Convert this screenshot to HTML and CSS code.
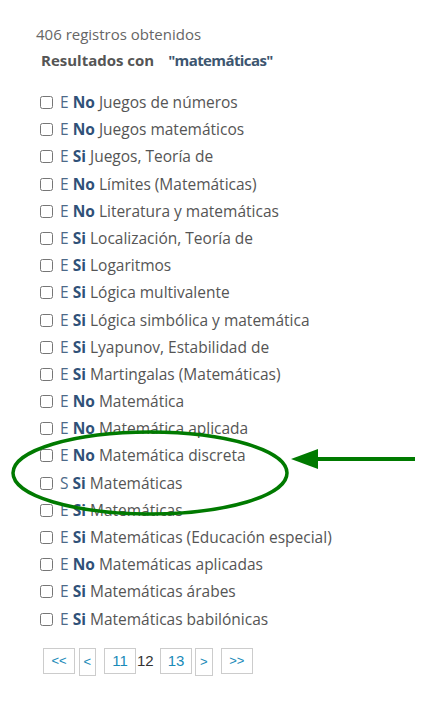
FILE: index.html
```html
<!DOCTYPE html>
<html lang="es">
<head>
<meta charset="utf-8">
<link rel="stylesheet" href="styles.css">
</head>
<body>
<div class="page">
  <p class="count">406 registros obtenidos</p>
  <p class="title">Resultados con <span class="q">"matemáticas"</span></p>
  <ul class="list">
    <li><input type="checkbox"><span class="t">E</span> <b>No</b> Juegos de números</li>
    <li><input type="checkbox"><span class="t">E</span> <b>No</b> Juegos matemáticos</li>
    <li><input type="checkbox"><span class="t">E</span> <b>Si</b> Juegos, Teoría de</li>
    <li><input type="checkbox"><span class="t">E</span> <b>No</b> Límites (Matemáticas)</li>
    <li><input type="checkbox"><span class="t">E</span> <b>No</b> Literatura y matemáticas</li>
    <li><input type="checkbox"><span class="t">E</span> <b>Si</b> Localización, Teoría de</li>
    <li><input type="checkbox"><span class="t">E</span> <b>Si</b> Logaritmos</li>
    <li><input type="checkbox"><span class="t">E</span> <b>Si</b> Lógica multivalente</li>
    <li><input type="checkbox"><span class="t">E</span> <b>Si</b> Lógica simbólica y matemática</li>
    <li><input type="checkbox"><span class="t">E</span> <b>Si</b> Lyapunov, Estabilidad de</li>
    <li><input type="checkbox"><span class="t">E</span> <b>Si</b> Martingalas (Matemáticas)</li>
    <li><input type="checkbox"><span class="t">E</span> <b>No</b> Matemática</li>
    <li><input type="checkbox"><span class="t">E</span> <b>No</b> Matemática aplicada</li>
    <li><input type="checkbox"><span class="t">E</span> <b>No</b> Matemática discreta</li>
    <li><input type="checkbox"><span class="t">S</span> <b>Si</b> Matemáticas</li>
    <li><input type="checkbox"><span class="t">E</span> <b>Si</b> Matemáticas</li>
    <li><input type="checkbox"><span class="t">E</span> <b>Si</b> Matemáticas (Educación especial)</li>
    <li><input type="checkbox"><span class="t">E</span> <b>No</b> Matemáticas aplicadas</li>
    <li><input type="checkbox"><span class="t">E</span> <b>Si</b> Matemáticas árabes</li>
    <li><input type="checkbox"><span class="t">E</span> <b>Si</b> Matemáticas babilónicas</li>
  </ul>
  <nav class="pager">
    <a class="pg wide first">&lt;&lt;</a>
    <a class="pg narrow prev">&lt;</a>
    <a class="pg num">11</a>
    <span class="cur">12</span>
    <a class="pg num">13</a>
    <a class="pg narrow next">&gt;</a>
    <a class="pg wide last">&gt;&gt;</a>
  </nav>
  <svg class="mark" width="441" height="706" viewBox="0 0 441 706">
    <ellipse cx="150" cy="473" rx="137" ry="41" fill="none" stroke="#007a00" stroke-width="3.5"/>
    <line x1="312" y1="459" x2="415" y2="459" stroke="#007a00" stroke-width="4"/>
    <polygon points="291,459 318,449 318,469" fill="#007a00"/>
  </svg>
</div>
</body>
</html>
```
FILE: styles.css
```css
body {
  margin: 0;
  background: #fff;
  font-family: "Open Sans", "Noto Sans", sans-serif;
  font-size: 15px;
  color: #555;
}
.page {
  position: relative;
  width: 441px;
  height: 706px;
  padding: 24px 0 0 36px;
  box-sizing: border-box;
}
.count {
  margin: 0;
  line-height: 20px;
  color: #666;
}
.title {
  margin: 6px 0 0 5px;
  line-height: 20px;
  font-weight: bold;
  color: #555;
}
.title .q {
  color: #3d5670;
  margin-left: 10px;
  letter-spacing: -0.6px;
}
.list {
  list-style: none;
  margin: 19px 0 0 0;
  padding: 0;
  font-size: 15.5px;
}
.list li {
  height: 27.2px;
  line-height: 27.2px;
  white-space: nowrap;
}
.list input {
  width: 13px;
  height: 13px;
  margin: 0 7px 0 4px;
  vertical-align: -1px;
}
.list .t {
  color: #4d6a89;
}
.list b {
  color: #2f5178;
}
.pager {
  display: flex;
  align-items: flex-start;
  margin: 15px 0 0 7px;
  color: #333;
}
.pg {
  display: flex;
  align-items: center;
  justify-content: center;
  box-sizing: border-box;
  height: 26px;
  border: 1px solid #ccc;
  color: #1a8ab8;
  font-family: "Liberation Sans", Arial, sans-serif;
  font-size: 13px;
}
.pg.wide {
  width: 32px;
}
.pg.narrow {
  width: 17.5px;
  height: 28px;
}
.pg.num {
  width: 32px;
  font-size: 15px;
}
.pg.first {
  margin-right: 3.5px;
}
.pg.prev {
  margin-right: 8px;
}
.pg.next {
  margin-left: 3px;
  margin-right: 8.3px;
}
.cur {
  display: flex;
  align-items: center;
  box-sizing: border-box;
  width: 24px;
  height: 26px;
  padding-left: 1px;
  font-family: "Liberation Sans", Arial, sans-serif;
  font-size: 15px;
  color: #333;
}
.mark {
  position: absolute;
  left: 0;
  top: 0;
  pointer-events: none;
}
```
